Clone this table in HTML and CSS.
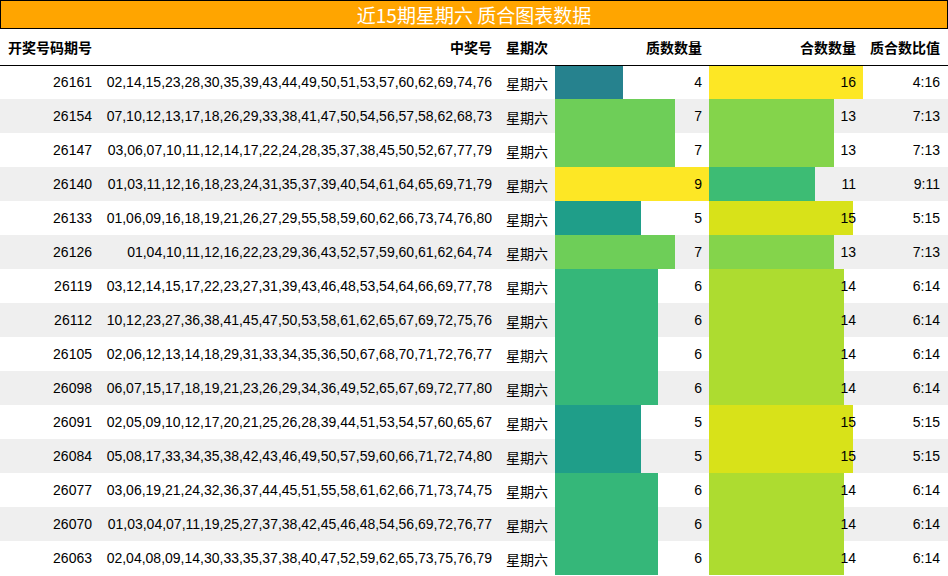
FILE: index.html
```html
<!DOCTYPE html>
<html lang="zh">
<head>
<meta charset="utf-8">
<link rel="stylesheet" href="styles.css">
</head>
<body>
<div class="title">近15期星期六 质合图表数据</div>
<table class="data">
<colgroup>
<col class="c-id"><col class="c-nums"><col class="c-day"><col class="c-bar"><col class="c-bar"><col class="c-ratio">
</colgroup>
<thead>
<tr><th>开奖号码期号</th><th>中奖号</th><th>星期次</th><th>质数数量</th><th>合数数量</th><th>质合数比值</th></tr>
</thead>
<tbody>
<tr><td>26161</td><td>02,14,15,23,28,30,35,39,43,44,49,50,51,53,57,60,62,69,74,76</td><td class="cjk">星期六</td><td class="bar" style="--w:44.44%;--c:#26828e">4</td><td class="bar" style="--w:100%;--c:#fde725">16</td><td>4:16</td></tr>
<tr><td>26154</td><td>07,10,12,13,17,18,26,29,33,38,41,47,50,54,56,57,58,62,68,73</td><td class="cjk">星期六</td><td class="bar" style="--w:77.78%;--c:#6ece58">7</td><td class="bar" style="--w:81.25%;--c:#84d44b">13</td><td>7:13</td></tr>
<tr><td>26147</td><td>03,06,07,10,11,12,14,17,22,24,28,35,37,38,45,50,52,67,77,79</td><td class="cjk">星期六</td><td class="bar" style="--w:77.78%;--c:#6ece58">7</td><td class="bar" style="--w:81.25%;--c:#84d44b">13</td><td>7:13</td></tr>
<tr><td>26140</td><td>01,03,11,12,16,18,23,24,31,35,37,39,40,54,61,64,65,69,71,79</td><td class="cjk">星期六</td><td class="bar" style="--w:100%;--c:#fde725">9</td><td class="bar" style="--w:68.75%;--c:#3dbc74">11</td><td>9:11</td></tr>
<tr><td>26133</td><td>01,06,09,16,18,19,21,26,27,29,55,58,59,60,62,66,73,74,76,80</td><td class="cjk">星期六</td><td class="bar" style="--w:55.56%;--c:#1f9e89">5</td><td class="bar" style="--w:93.75%;--c:#d8e219">15</td><td>5:15</td></tr>
<tr><td>26126</td><td>01,04,10,11,12,16,22,23,29,36,43,52,57,59,60,61,62,64,74</td><td class="cjk">星期六</td><td class="bar" style="--w:77.78%;--c:#6ece58">7</td><td class="bar" style="--w:81.25%;--c:#84d44b">13</td><td>7:13</td></tr>
<tr><td>26119</td><td>03,12,14,15,17,22,23,27,31,39,43,46,48,53,54,64,66,69,77,78</td><td class="cjk">星期六</td><td class="bar" style="--w:66.67%;--c:#35b779">6</td><td class="bar" style="--w:87.5%;--c:#addc30">14</td><td>6:14</td></tr>
<tr><td>26112</td><td>10,12,23,27,36,38,41,45,47,50,53,58,61,62,65,67,69,72,75,76</td><td class="cjk">星期六</td><td class="bar" style="--w:66.67%;--c:#35b779">6</td><td class="bar" style="--w:87.5%;--c:#addc30">14</td><td>6:14</td></tr>
<tr><td>26105</td><td>02,06,12,13,14,18,29,31,33,34,35,36,50,67,68,70,71,72,76,77</td><td class="cjk">星期六</td><td class="bar" style="--w:66.67%;--c:#35b779">6</td><td class="bar" style="--w:87.5%;--c:#addc30">14</td><td>6:14</td></tr>
<tr><td>26098</td><td>06,07,15,17,18,19,21,23,26,29,34,36,49,52,65,67,69,72,77,80</td><td class="cjk">星期六</td><td class="bar" style="--w:66.67%;--c:#35b779">6</td><td class="bar" style="--w:87.5%;--c:#addc30">14</td><td>6:14</td></tr>
<tr><td>26091</td><td>02,05,09,10,12,17,20,21,25,26,28,39,44,51,53,54,57,60,65,67</td><td class="cjk">星期六</td><td class="bar" style="--w:55.56%;--c:#1f9e89">5</td><td class="bar" style="--w:93.75%;--c:#d8e219">15</td><td>5:15</td></tr>
<tr><td>26084</td><td>05,08,17,33,34,35,38,42,43,46,49,50,57,59,60,66,71,72,74,80</td><td class="cjk">星期六</td><td class="bar" style="--w:55.56%;--c:#1f9e89">5</td><td class="bar" style="--w:93.75%;--c:#d8e219">15</td><td>5:15</td></tr>
<tr><td>26077</td><td>03,06,19,21,24,32,36,37,44,45,51,55,58,61,62,66,71,73,74,75</td><td class="cjk">星期六</td><td class="bar" style="--w:66.67%;--c:#35b779">6</td><td class="bar" style="--w:87.5%;--c:#addc30">14</td><td>6:14</td></tr>
<tr><td>26070</td><td>01,03,04,07,11,19,25,27,37,38,42,45,46,48,54,56,69,72,76,77</td><td class="cjk">星期六</td><td class="bar" style="--w:66.67%;--c:#35b779">6</td><td class="bar" style="--w:87.5%;--c:#addc30">14</td><td>6:14</td></tr>
<tr><td>26063</td><td>02,04,08,09,14,30,33,35,37,38,40,47,52,59,62,65,73,75,76,79</td><td class="cjk">星期六</td><td class="bar" style="--w:66.67%;--c:#35b779">6</td><td class="bar" style="--w:87.5%;--c:#addc30">14</td><td>6:14</td></tr>
</tbody>
</table>
</body>
</html>
```

FILE: styles.css
```css
html, body {
  margin: 0;
  padding: 0;
  background: #fff;
}
body {
  width: 948px;
  font-family: "Liberation Sans", "Noto Sans CJK SC", sans-serif;
  font-size: 14px;
  color: #000;
}
.title {
  box-sizing: border-box;
  height: 29px;
  background: #ffa500;
  border: 1px solid #000;
  color: #fff;
  text-align: center;
  font-family: "Noto Sans CJK SC", sans-serif;
  font-size: 19px;
  line-height: 27px;
}
.data {
  width: 948px;
  border-collapse: collapse;
  table-layout: fixed;
}
.c-id { width: 100px; }
.c-nums { width: 400px; }
.c-day { width: 55px; }
.c-bar { width: 154px; }
.c-ratio { width: 85px; }
.data th {
  box-sizing: border-box;
  height: 36px;
  padding: 0 8px 0 0;
  text-align: right;
  font-family: "Noto Sans CJK SC", sans-serif;
  font-weight: bold;
  font-size: 14px;
  line-height: 16px;
  border-bottom: 1px solid #000;
  white-space: nowrap;
}
.data th:first-child {
  text-align: left;
  padding-left: 8px;
}
.data th:nth-child(3),
.data th:nth-child(4),
.data th:nth-child(5) { padding-right: 7px; }
.data tbody tr {
  height: 34px;
}
.data td {
  box-sizing: border-box;
  height: 34px;
  padding: 0 8px 0 0;
  text-align: right;
  white-space: nowrap;
  line-height: 16px;
  overflow: hidden;
}
.data td.cjk {
  font-family: "Noto Sans CJK SC", sans-serif;
  padding-right: 7px;
  padding-top: 2px;
}
.data td.bar {
  padding-right: 7px;
  background-image: linear-gradient(90deg, var(--c) var(--w), transparent var(--w));
}
.data tbody tr:nth-child(even) {
  background: #efefef;
}
```
